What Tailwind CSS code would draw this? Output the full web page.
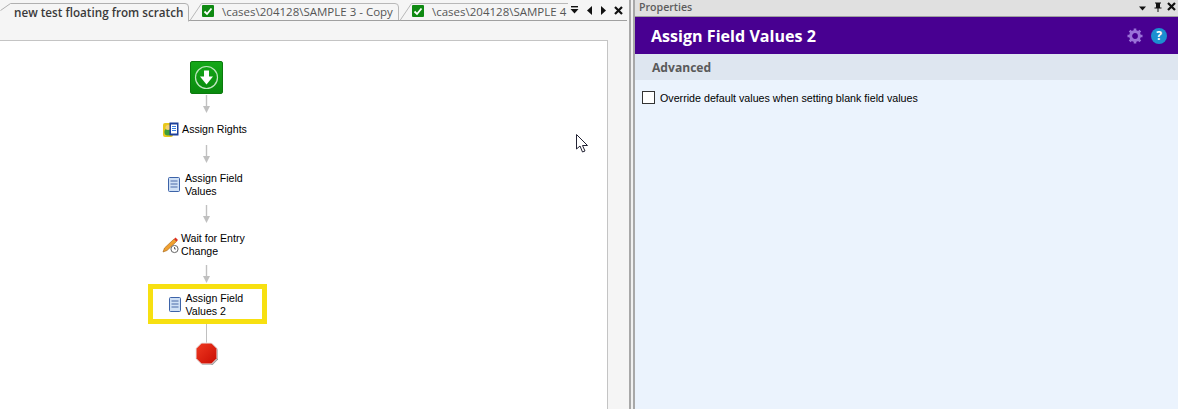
<!DOCTYPE html>
<html>
<head>
<meta charset="utf-8">
<script src="https://cdn.jsdelivr.net/npm/@tailwindcss/browser@4"></script>
</head>
<body class="w-[1178px] h-[409px] overflow-hidden bg-[#f0f0f0] font-['Open_Sans',sans-serif]">
<div class="flex h-[409px] w-[1178px]">
  <!-- Left document pane -->
  <div class="w-[631px] h-full flex flex-col bg-[#f5f5f5] border-r-2 border-[#a8a8a8] shrink-0">
    <div class="relative h-[21px] flex items-end shrink-0">
      <div class="absolute left-0 right-[2px] bottom-0 h-px bg-[#a0a0a0] ml-[189px]"></div>
      <div class="relative w-[190px] h-[20px] shrink-0">
        <svg class="absolute left-0 top-0" width="190" height="21" viewBox="0 0 190 21" fill="none"><path d="M0.5 9.5 L10.5 2.5 H185 Q188.5 2.5 188.5 6 V20.5" stroke="#b0b0b0"/></svg>
        <span class="absolute left-[14px] top-[2px] text-[11.7px] leading-[18px] font-semibold text-[#3a3a3a] whitespace-nowrap">new test floating from scratch</span>
      </div>
      <div class="relative w-[210px] h-[20px] shrink-0">
        <svg class="absolute left-0 top-0" width="210" height="20" viewBox="0 0 210 20" fill="none"><path d="M0 19.5 L11.5 2.5 H205 Q208.5 2.5 208.5 6 V19" stroke="#b8b8b8"/></svg>
        <svg class="absolute left-[12px] top-[4px]" width="12" height="12" viewBox="0 0 12 12"><rect width="12" height="12" rx="1" fill="#0f8a12"/><path d="M2.5 6.5 L5 9 L9.5 3.5" stroke="#fff" stroke-width="1.8" fill="none"/></svg>
        <span class="absolute left-[32px] top-[2px] text-[11.5px] leading-[18px] text-[#555] whitespace-nowrap">\cases\204128\SAMPLE 3 - Copy</span>
      </div>
      <div class="relative w-[168px] h-[20px] shrink-0 overflow-hidden">
        <svg class="absolute left-0 top-0" width="168" height="20" viewBox="0 0 168 20" fill="none"><path d="M0 19.5 L11.5 2.5 H168" stroke="#b8b8b8"/></svg>
        <svg class="absolute left-[12px] top-[4px]" width="12" height="12" viewBox="0 0 12 12"><rect width="12" height="12" rx="1" fill="#0f8a12"/><path d="M2.5 6.5 L5 9 L9.5 3.5" stroke="#fff" stroke-width="1.8" fill="none"/></svg>
        <span class="absolute left-[32px] top-[2px] text-[11.5px] leading-[18px] text-[#555] whitespace-nowrap">\cases\204128\SAMPLE 4</span>
      </div>
      <div class="flex-1 h-[20px] relative">
        <svg class="absolute left-0 top-0" width="60" height="20" viewBox="0 0 60 20" fill="#111">
          <rect x="3" y="5" width="7" height="1.4"/><path d="M2.5 8 H10.5 L6.5 12.5 Z"/>
          <path d="M24 5 V14 L19 9.5 Z"/>
          <path d="M33 5 V14 L38 9.5 Z"/>
          <path d="M47 6 L54 13 M54 6 L47 13" stroke="#111" stroke-width="2.2" fill="none"/>
        </svg>
      </div>
    </div>
    <div class="flex-1 pt-[19px] min-h-0">
      <div class="relative w-[608px] h-full bg-white border-t border-r border-[#c4c4c4] font-['Liberation_Sans',sans-serif] text-[10.6px] leading-[13px] text-black">
        <div class="w-[412px] flex flex-col items-center">
          <div class="mt-[20px] w-[33px] h-[33px] rounded-[2px] bg-gradient-to-b from-[#14a818] to-[#0a8a0e] border border-[#0b7a0e] flex items-center justify-center">
            <svg width="25" height="25" viewBox="0 0 25 25" fill="none"><circle cx="12.5" cy="12.5" r="11" stroke="#bfe6bf" stroke-width="1.2"/><path d="M10 5.5 H15 V11.5 H19 L12.5 19.5 L6 11.5 H10 Z" fill="#fff"/></svg>
          </div>
          <svg class="mt-px" width="9" height="18" viewBox="0 0 9 18"><path d="M4.5 0 V12" stroke="#c0c0c0" stroke-width="1.4"/><path d="M1 11 H8 L4.5 18 Z" fill="#c0c0c0"/></svg>
          <div class="h-[32px] flex items-center gap-[3px] pr-[2px] pt-px">
            <svg width="16" height="16" viewBox="0 0 16 16"><rect x="0" y="1" width="10" height="14" rx="2" fill="#e8c81c"/><circle cx="5" cy="10" r="3.6" fill="#3e9e3a"/><circle cx="5" cy="5.5" r="2.5" fill="#f4d070"/><rect x="6.5" y="0.5" width="9" height="13" fill="#1c3f9a"/><rect x="8" y="2.5" width="6" height="9" fill="#fff"/><path d="M9 4.5H13M9 6.5H13M9 8.5H13" stroke="#3a7de0"/></svg>
            <span>Assign Rights</span>
          </div>
          <svg width="9" height="18" viewBox="0 0 9 18"><path d="M4.5 0 V12" stroke="#c0c0c0" stroke-width="1.4"/><path d="M1 11 H8 L4.5 18 Z" fill="#c0c0c0"/></svg>
          <div class="h-[42px] flex items-center gap-[5px] pt-px pl-[2px]">
            <svg width="12" height="16" viewBox="0 0 12 16" fill="none"><rect x="0.5" y="0.5" width="11" height="14" rx="1" fill="#cfe0f5" stroke="#3d63a8"/><path d="M2.5 4H9.5M2.5 7H9.5M2.5 10H9.5" stroke="#4a6aa8"/></svg>
            <span class="w-[61px]">Assign Field Values</span>
          </div>
          <svg width="9" height="18" viewBox="0 0 9 18"><path d="M4.5 0 V12" stroke="#c0c0c0" stroke-width="1.4"/><path d="M1 11 H8 L4.5 18 Z" fill="#c0c0c0"/></svg>
          <div class="h-[42px] flex items-center gap-[1px] pt-px pl-[3px]">
            <svg width="18" height="18" viewBox="0 0 18 18" fill="none"><path d="M1 16 L2.5 12 L12 3 L14.5 5.5 L5 14.5 Z" fill="#f0a030" stroke="#a06010" stroke-width="0.6"/><path d="M12 3 L13.5 1.5 L16 4 L14.5 5.5 Z" fill="#e03020"/><circle cx="12.5" cy="13" r="3.6" fill="#fff" stroke="#666"/><path d="M12.5 11 V13 H14" stroke="#444" stroke-width="0.8"/></svg>
            <span class="w-[72px]">Wait for Entry Change</span>
          </div>
          <svg width="9" height="18" viewBox="0 0 9 18"><path d="M4.5 0 V12" stroke="#c0c0c0" stroke-width="1.4"/><path d="M1 11 H8 L4.5 18 Z" fill="#c0c0c0"/></svg>
          <div class="mt-px ml-[3px] w-[119px] h-[40px] border-[5px] border-[#f7e011] flex items-center justify-center gap-[5px] pt-px">
            <svg width="12" height="16" viewBox="0 0 12 16" fill="none"><rect x="0.5" y="0.5" width="11" height="14" rx="1" fill="#cfe0f5" stroke="#3d63a8"/><path d="M2.5 4H9.5M2.5 7H9.5M2.5 10H9.5" stroke="#4a6aa8"/></svg>
            <span class="w-[61px]">Assign Field Values 2</span>
          </div>
          <div class="w-px h-[19px] bg-[#c0c0c0] ml-px"></div>
          <svg class="-mt-px ml-[2px]" width="24" height="25" viewBox="0 0 24 25"><defs><linearGradient id="stopfill" x1="0" y1="0" x2="1" y2="1"><stop offset="0" stop-color="#f03a22"/><stop offset="1" stop-color="#c80c02"/></linearGradient></defs><path d="M7.5 2 H17.5 L23 7.5 V17.5 L17.5 23 H7.5 L2 17.5 V7.5 Z" fill="#9a9a9a"/><path d="M6.5 1 H16.5 L22 6.5 V16.5 L16.5 22 H6.5 L1 16.5 V6.5 Z" fill="url(#stopfill)" stroke="#e8e8e8"/></svg>
        </div>
        <svg class="absolute left-[576px] top-[93px]" width="13" height="20" viewBox="0 0 13 20" fill="#fff" stroke="#223"><path d="M0.5 0.5 V15 L4 12 L6.5 18 L9 17 L6.5 11.5 H11.5 Z"/></svg>
      </div>
    </div>
  </div>
  <!-- gap -->
  <div class="w-[2px] h-full bg-[#f0f0f0] shrink-0"></div>
  <!-- Right properties pane -->
  <div class="flex-1 h-full flex flex-col border-l-2 border-[#a8a8a8] min-w-0">
    <div class="relative h-[17px] bg-[#e0e0e0] border-b border-[#a0a0a0] shrink-0 flex items-start pl-[4px]">
      <span class="text-[10.6px] leading-[14px] font-semibold text-[#5c5c5c]">Properties</span>
      <svg class="absolute right-0 top-0" width="40" height="16" viewBox="0 0 40 16" fill="#111">
        <path d="M1 6.5 H8 L4.5 10.5 Z"/>
        <path d="M17 2.5 H23 V3.5 H22 V7.5 H23.5 V8.5 H20.5 V12 H19.5 V8.5 H16.5 V7.5 H18 V3.5 H17 Z"/>
        <path d="M30 3 L37 10 M37 3 L30 10" stroke="#111" stroke-width="2.2" fill="none"/>
      </svg>
    </div>
    <div class="h-[37px] bg-[#480091] shrink-0 flex items-center justify-between pl-[16px] pr-[11px]">
      <span class="text-[16.1px] leading-[22px] font-bold text-white pt-px">Assign Field Values 2</span>
      <div class="flex items-center gap-[8px]">
        <svg width="16" height="16" viewBox="0 0 16 16" fill="none"><circle cx="8" cy="8" r="4.4" stroke="#9a72d8" stroke-width="3"/><path d="M8 0.5V3M8 13V15.5M0.5 8H3M13 8H15.5M2.7 2.7L4.5 4.5M11.5 11.5L13.3 13.3M13.3 2.7L11.5 4.5M4.5 11.5L2.7 13.3" stroke="#9a72d8" stroke-width="2.6"/></svg>
        <div class="w-[16px] h-[16px] rounded-full bg-[#1c8fd0] flex items-center justify-center text-[12px] leading-none font-bold text-white">?</div>
      </div>
    </div>
    <div class="h-[26px] bg-[#dee6f0] shrink-0 flex items-center pl-[17px]">
      <span class="text-[12.1px] leading-[16px] font-bold text-[#5a5a5a] pt-[2px]">Advanced</span>
    </div>
    <div class="flex-1 bg-[#ebf3fd] pt-[11px] pl-[7px] flex items-start gap-[5px] font-['Liberation_Sans',sans-serif] text-[10.7px] leading-[14px] text-black">
      <div class="w-[13px] h-[13px] bg-white border border-[#333]"></div>
      <span>Override default values when setting blank field values</span>
    </div>
  </div>
</div>
</body>
</html>
